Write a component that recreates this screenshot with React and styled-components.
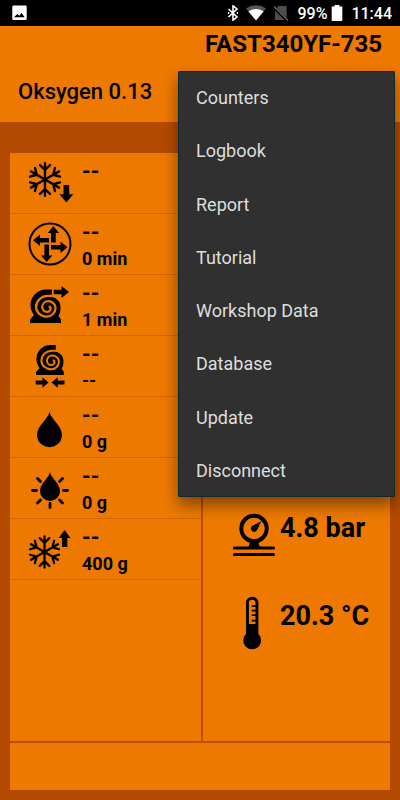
import React from 'react';
import styled, { createGlobalStyle } from 'styled-components';

const menuItems = [
  'Counters',
  'Logbook',
  'Report',
  'Tutorial',
  'Workshop Data',
  'Database',
  'Update',
  'Disconnect',
];

// shared drawings
const Snowflake = ({ x, y, scale = 1 }) => (
  <g transform={`translate(${x} ${y}) scale(${scale})`} stroke="#000" strokeWidth="2.4" strokeLinecap="round" fill="none">
    {[0, 60, 120, 180, 240, 300].map(angle => (
      <path key={angle} transform={`rotate(${angle})`} d="M0 0V-16.2M0 -9.5L-5 -14.4M0 -9.5L5 -14.4" />
    ))}
  </g>
);

// black housing with the spiral groove cut in the panel colour
const Compressor = ({ transform }) => (
  <g transform={transform}>
    <path d="M22 .5H16A15.500 15.500 0 0 0 .5 16C.5 20 2 23.500 4 26L0 30.500V34H31V30.500L28.500 27C31.500 22 31.500 14 27 10.500C25 8.700 22.500 8 22 8Z" />
    <path
      d="M24 6.900H18A11.800 11.300 0 0 0 6 18A11 9.800 0 0 0 17 27.600A8.700 8.700 0 0 0 25.500 19A7.300 7 0 0 0 18 12.200A6 6 0 0 0 12.200 18A5 5 0 0 0 17 22.800A3.400 3.400 0 0 0 20.600 19.500Q20.600 17.600 18.600 17.600"
      fill="none"
      stroke="#ed7900"
      strokeWidth="2.300"
    />
  </g>
);

const RecoveryIcon = () => (
  <Icon viewBox="0 0 48 56" aria-hidden="true">
    <Snowflake x={19} y={24.5} />
    <path d="M37.500 30H43.200V39.200H47.300L40.300 47.500L33.500 39.200H37.500Z" />
  </Icon>
);

const RecycleIcon = () => (
  <Icon viewBox="0 0 48 56" aria-hidden="true">
    <circle cx="24" cy="28" r="20.500" fill="none" stroke="#000" strokeWidth="1.900" />
    <path d="M27.400 10L33 17H29.700V26.500H25V17H21.800Z" />
    <path d="M7 24.200L14 18.600V22H23V26.500H14V30Z" />
    <path d="M41.500 31.200L34.500 25.600V29H25V33.500H34.500V37Z" />
    <path d="M20.700 46L15 39.500H18.400V28.500H23V39.500H26.400Z" />
  </Icon>
);

const VacuumIcon = () => (
  <Icon viewBox="0 0 48 56" aria-hidden="true">
    <Compressor transform="translate(4 12)" />
    <path d="M27.700 12.700H35.500V9L43 15L35.500 21V17.300H27.700Z" />
  </Icon>
);

const LeakTestIcon = () => (
  <Icon viewBox="0 0 48 56" aria-hidden="true">
    <Compressor transform="translate(10 6.500) scale(.9)" />
    <path d="M9.700 42.500H16.500V39.300L22.500 44.500L16.500 49.700V46.500H9.700Z" />
    <path d="M38.500 42.500H31.700V39.300L25.500 44.500L31.700 49.700V46.500H38.500Z" />
  </Icon>
);

const OilIcon = () => (
  <Icon viewBox="0 0 48 56" aria-hidden="true">
    <path d="M23.500 13C25 20 36 27 36 36A12.500 12.200 0 0 1 11 36C11 27 22 20 23.500 13Z" />
  </Icon>
);

const UvIcon = () => (
  <Icon viewBox="0 0 48 56" aria-hidden="true">
    <path d="M24 12C25 18 34 23.500 34 31A10 10 0 0 1 14 31C14 23.500 23 18 24 12Z" />
    <path
      d="M6.500 30.500H10.500M37.500 30.500H41.500M24 43.500V47.500M11.500 18.500L14.500 21.500M36.500 18.500L33.500 21.500M11.500 43L14.500 40M36.500 43L33.500 40"
      stroke="#000"
      strokeWidth="2.800"
      strokeLinecap="round"
    />
  </Icon>
);

const ChargeIcon = () => (
  <Icon viewBox="0 0 48 56" aria-hidden="true">
    <Snowflake x={18.500} y={31} scale={0.96} />
    <path d="M38.600 9L44.500 17H41.300V26H36V17H32.700Z" />
  </Icon>
);

const GaugeIcon = () => (
  <Icon viewBox="0 0 48 56" aria-hidden="true">
    <circle cx="24" cy="20.500" r="12.700" fill="none" stroke="#000" strokeWidth="4" />
    <path d="M31.500 13L27 22A3.200 3.200 0 1 1 22.500 17.800Z" />
    <path d="M19.500 32H28.700V36L30 39H18.500L19.500 36Z" />
    <path d="M4.500 40H43.500M4.500 46.500H43.500" stroke="#000" strokeWidth="3.200" strokeLinecap="round" />
  </Icon>
);

const ThermometerIcon = () => (
  <Icon viewBox="0 0 48 56" aria-hidden="true">
    <path
      fillRule="evenodd"
      d="M16 7A6.200 6.200 0 0 1 28.400 7V38A8.900 8.900 0 1 1 16 38ZM18.900 7V28H25.500V25.500H21.700V23.700H25.500V20H21.700V18.200H25.500V15.500H21.700V13.700H25.500V11H21.700V9.200H25.500V7A3.300 3.300 0 0 0 18.900 7Z"
    />
  </Icon>
);

const services = [
  { id: 'recovery', icon: RecoveryIcon, value: '--' },
  { id: 'recycle', icon: RecycleIcon, value: '--', target: '0 min' },
  { id: 'vacuum', icon: VacuumIcon, value: '--', target: '1 min' },
  { id: 'leak', icon: LeakTestIcon, value: '--', target: '--' },
  { id: 'oil', icon: OilIcon, value: '--', target: '0 g' },
  { id: 'uv', icon: UvIcon, value: '--', target: '0 g' },
  { id: 'charge', icon: ChargeIcon, value: '--', target: '400 g' },
];

function StatusBar() {
  return (
    <StatusBarStyled>
      <StatusIcon $width={15} viewBox="0 0 15 16" aria-hidden="true">
        <path fillRule="evenodd" fill="#fff" d="M1.500 .5H13.500A1.200 1.200 0 0 1 14.700 1.700V13.800A1.200 1.200 0 0 1 13.500 15H1.500A1.200 1.200 0 0 1 .3 13.800V1.700A1.200 1.200 0 0 1 1.500 .5ZM2 12.200H12.700L9.500 8L7.200 10.800L5.300 9Z" />
      </StatusIcon>
      <StatusGroup $gap={8}>
        <StatusGroup $gap={7}>
          <StatusIcon $width={12} viewBox="0 0 12 16" aria-hidden="true">
            <path d="M1.500 4L10 12L6 15.200V.8L10 4L1.500 12" fill="none" stroke="#fff" strokeWidth="1.600" />
            <path d="M1 8H2.200M9.800 8H11" stroke="#fff" strokeWidth="1.800" />
          </StatusIcon>
          <StatusIcon $width={20} viewBox="0 0 20 16" aria-hidden="true">
            <path d="M0 3.500C6 -1 14 -1 20 3.500L10 15.500Z" fill="#555" />
            <path d="M2.500 6.500C7 3.200 13 3.200 17.500 6.500L10 15.500Z" fill="#fff" />
          </StatusIcon>
          <StatusIcon $width={16} viewBox="0 0 16 16" aria-hidden="true">
            <path d="M5.500 1H12.500A1.200 1.200 0 0 1 13.700 2.200V15H2V4.500Z" fill="#4d4d4d" />
            <path d="M.5 2L14.500 15.700" stroke="#000" strokeWidth="3" />
            <path d="M1 1.500L15 15.500" stroke="#666" strokeWidth="1.300" />
          </StatusIcon>
        </StatusGroup>
        <StatusGroup $gap={4}>
          <StatusText>99%</StatusText>
          <StatusIcon $width={12} viewBox="0 0 12 16" aria-hidden="true">
            <path d="M.7 1.500H3.500V0H8.500V1.500H11.300V16H.7Z" fill="#fff" />
          </StatusIcon>
        </StatusGroup>
        <StatusText>11:44</StatusText>
      </StatusGroup>
    </StatusBarStyled>
  );
}

function App() {
  return (
    <Page>
      <GlobalStyle />
      <StatusBar />
      <Header>
        <Model>FAST340YF-735</Model>
        <Oxygen>Oksygen 0.13</Oxygen>
      </Header>
      <Frame>
        <Panel>
          <Services>
            {services.map(({ id, icon: ServiceIcon, value, target }) => (
              <ServiceRow key={id}>
                <ServiceIcon />
                <ServiceValues>
                  <Value>{value}</Value>
                  {target && <Target>{target}</Target>}
                </ServiceValues>
              </ServiceRow>
            ))}
          </Services>
          <Readings>
            <Reading>
              <GaugeIcon />
              <ReadingText>4.8 bar</ReadingText>
            </Reading>
            <Reading>
              <ThermometerIcon />
              <ReadingText>20.3 °C</ReadingText>
            </Reading>
          </Readings>
        </Panel>
        <Footer />
      </Frame>
      <Menu>
        {menuItems.map(item => (
          <MenuItem key={item} type="button">{item}</MenuItem>
        ))}
      </Menu>
    </Page>
  );
}

export default App;

const GlobalStyle = createGlobalStyle`
  *, *::before, *::after {
    box-sizing: border-box;
  }

  body {
    margin: 0;
    background: #b44a00;
    color: #000;
    font-family: Roboto, sans-serif;
  }
`

const Page = styled.div`
  position: relative;
  display: flex;
  flex-direction: column;
  min-height: 100vh;
`

const StatusBarStyled = styled.div`
  display: flex;
  align-items: center;
  justify-content: space-between;
  height: 26px;
  padding: 0 8px 0 12px;
  background: #000;
  color: #fff;
`

const StatusGroup = styled.div`
  display: flex;
  align-items: center;
  gap: ${props => props.$gap}px;
`

const StatusIcon = styled.svg`
  flex: none;
  width: ${props => props.$width}px;
  height: 16px;
`

const StatusText = styled.span`
  padding-top: 2px;
  font-size: 16px;
  line-height: 24px;
  font-weight: 500;
`

const Header = styled.header`
  padding: 0 18px;
  background: #ed7900;
`

const Model = styled.h1`
  margin: 0;
  font-size: 24px;
  line-height: 36px;
  font-weight: 700;
  text-align: right;
`

const Oxygen = styled.p`
  margin: 0;
  font-size: 22px;
  line-height: 60px;
  font-weight: 500;
`

const Frame = styled.main`
  display: flex;
  flex: 1;
  flex-direction: column;
  padding: 31px 10px 10px;
`

const Panel = styled.div`
  display: grid;
  flex: 1;
  grid-template-columns: 193fr 187fr;
  background: #ed7900;
`

const Services = styled.ul`
  margin: 0;
  padding: 0;
  border-right: 2px solid #b85000;
  list-style: none;
`

const ServiceRow = styled.li`
  display: flex;
  gap: 8px;
  height: 61px;
  padding: 2px 16px;
  border-bottom: 1px solid #d26700;
`

const Icon = styled.svg`
  flex: none;
  width: 48px;
  height: 56px;
`

const ServiceValues = styled.div`
  display: flex;
  flex-direction: column;
  padding-top: 3px;
`

const Value = styled.span`
  font-size: 22px;
  line-height: 28px;
  font-weight: 700;
`

const Target = styled.span`
  font-size: 18px;
  line-height: 24px;
  font-weight: 700;
`

const Readings = styled.section`
  display: flex;
  flex-direction: column;
  justify-content: flex-end;
  gap: 32px;
  padding: 0 0 89px 27px;
`

const Reading = styled.div`
  display: flex;
  gap: 2px;
`

const ReadingText = styled.span`
  font-size: 27px;
  line-height: 40px;
  font-weight: 700;
`

const Footer = styled.footer`
  height: 49px;
  border-top: 2px solid #b85000;
  background: #ed7900;
`

const Menu = styled.nav`
  position: absolute;
  top: 71px;
  right: 5px;
  display: grid;
  grid-auto-rows: 1fr;
  width: 217px;
  height: 426px;
  border-radius: 2px;
  background: #303030;
  box-shadow: inset 0 0 0 1px #10292c, 0 8px 16px rgba(0, 0, 0, 0.45);
`

const MenuItem = styled.button`
  padding: 0 18px;
  border: 0;
  background: transparent;
  color: #dedede;
  font-family: inherit;
  font-size: 18px;
  text-align: left;
  cursor: pointer;
`
